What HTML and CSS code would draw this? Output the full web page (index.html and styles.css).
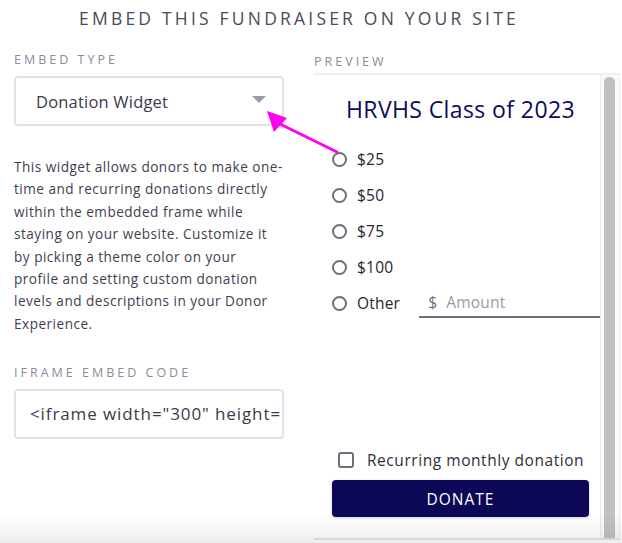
FILE: index.html
```html
<!DOCTYPE html>
<html>
<head>
  <link rel="stylesheet" href="styles.css">
</head>
<body>
  <div class="page">
    <h1 class="page-title">EMBED THIS FUNDRAISER ON YOUR SITE</h1>

    <div class="columns">
      <div class="settings">
        <p class="label">EMBED TYPE</p>
        <div class="select">
          <span>Donation Widget</span>
          <span class="caret"></span>
        </div>

        <p class="description">This widget allows donors to make one-time and recurring donations directly within the embedded frame while staying on your website. Customize it by picking a theme color on your profile and setting custom donation levels and descriptions in your Donor Experience.</p>

        <p class="label label-code">IFRAME EMBED CODE</p>
        <div class="code-box"><span class="code">&lt;iframe width="300" height=</span></div>
      </div>

      <div class="preview">
        <p class="label">PREVIEW</p>
        <div class="frame">
          <div class="widget">
            <h2 class="widget-title">HRVHS Class of 2023</h2>

            <div class="levels">
              <label class="level"><span class="radio"></span>$25</label>
              <label class="level"><span class="radio"></span>$50</label>
              <label class="level"><span class="radio"></span>$75</label>
              <label class="level"><span class="radio"></span>$100</label>
              <label class="level">
                <span class="radio"></span>Other
                <span class="amount"><span class="dollar">$</span>Amount</span>
              </label>
            </div>

            <label class="recurring"><span class="checkbox"></span>Recurring monthly donation</label>
            <button class="donate">DONATE</button>
          </div>
          <div class="scrollbar"><div class="thumb"></div></div>
        </div>
      </div>
    </div>
  </div>

  <!-- arrow annotation -->
  <svg class="pointer" width="622" height="543" viewBox="0 0 622 543">
    <line x1="337" y1="152" x2="278" y2="123" stroke="#ff00f0" stroke-width="3" stroke-linecap="round"/>
    <polygon points="267,111 287,118 274,132" fill="#ff00f0"/>
  </svg>

  <div class="fade"></div>
</body>
</html>
```

FILE: styles.css
```css
* {
  margin: 0;
  padding: 0;
  box-sizing: border-box;
}

body {
  font-family: "Open Sans", "Noto Sans", sans-serif;
  color: #3f3f50;
  background: #fff;
  overflow: hidden;
}

.page {
  width: 622px;
  height: 543px;
}

.page-title {
  font-size: 17.5px;
  font-weight: 400;
  letter-spacing: 3.2px;
  color: #4a4a5a;
  text-align: center;
  padding: 6px 24px 0 0;
  height: 52px;
}

.columns {
  display: grid;
  grid-template-columns: 270px 306px;
  column-gap: 30px;
  padding-left: 14px;
}

.label {
  font-size: 12.5px;
  letter-spacing: 3px;
  color: #8b8b9b;
  line-height: 16px;
  margin-bottom: 8px;
}

.select {
  height: 50px;
  border: 2px solid #e2e2e8;
  border-radius: 4px;
  display: flex;
  align-items: center;
  justify-content: space-between;
  padding: 0 16px 0 20px;
  font-size: 16.5px;
  letter-spacing: 0.2px;
  color: #3b3b4b;
}

.caret {
  width: 0;
  height: 0;
  border-left: 7px solid transparent;
  border-right: 7px solid transparent;
  border-top: 7px solid #9a9aaa;
  margin-top: -4px;
}

.description {
  font-size: 13.6px;
  letter-spacing: 0.49px;
  line-height: 22.4px;
  color: #3f3f50;
  margin-top: 30px;
}

.label-code {
  margin-top: 30px;
}

.code-box {
  height: 50px;
  border: 2px solid #e2e2e8;
  border-radius: 4px;
  padding: 0 0 0 14px;
  overflow: hidden;
  color: #3b3b4b;
}

.code {
  display: block;
  font-size: 17px;
  letter-spacing: 0.9px;
  line-height: 46px;
  white-space: nowrap;
}

.preview .label {
  margin-top: 2px;
  margin-bottom: 3px;
}

.frame {
  display: flex;
  height: 467px;
  border-top: 2px solid #f0f0f2;
  border-bottom: 2px solid #e4e4e4;
}

.widget {
  width: 286px;
  padding: 18px 11px 0 18px;
  display: flex;
  flex-direction: column;
  overflow: hidden;
}

.widget-title {
  font-size: 23px;
  font-weight: 400;
  letter-spacing: 0.4px;
  color: #0d0a5c;
  text-align: center;
  margin-bottom: 23px;
}

.levels {
  display: flex;
  flex-direction: column;
  gap: 14px;
}

.level {
  display: flex;
  align-items: center;
  height: 22px;
  font-size: 15.5px;
  letter-spacing: 0.2px;
  color: #26262e;
}

.radio {
  flex-shrink: 0;
  width: 15px;
  height: 15px;
  border: 2px solid #6d6d7d;
  border-radius: 50%;
  margin-right: 10px;
}

.amount {
  display: flex;
  align-items: center;
  margin-left: 19px;
  width: 182px;
  flex-shrink: 0;
  height: 30px;
  padding-left: 9px;
  border-bottom: 2px solid #6d6d7d;
  color: #9a9aa6;
  font-size: 15.5px;
}

.dollar {
  color: #6d6d7d;
  margin-right: 9px;
}

.recurring {
  display: flex;
  align-items: center;
  margin-top: auto;
  font-size: 15.5px;
  letter-spacing: 0.55px;
  color: #2f2f3a;
  margin-bottom: 9px;
}

.checkbox {
  flex-shrink: 0;
  width: 16px;
  height: 16px;
  border: 2px solid #6d6d7d;
  border-radius: 3px;
  margin: 0 13px 0 6px;
}

.donate {
  height: 37px;
  width: 257px;
  background: #0d0758;
  color: #fff;
  border: none;
  border-radius: 4px;
  font-family: inherit;
  font-size: 15.5px;
  letter-spacing: 1px;
  margin-bottom: 21px;
  box-shadow: 0 1px 3px rgba(0, 0, 0, 0.2);
}

.scrollbar {
  width: 20px;
  border-left: 1px solid #ececec;
  border-right: 1px solid #ececec;
  padding: 2px 4px 0 3px;
  background: #fafafa;
}

.thumb {
  height: 100%;
  background: #c1c1c1;
  border-radius: 5px 5px 0 0;
}

.pointer {
  position: absolute;
  top: 0;
  left: 0;
  pointer-events: none;
}

.fade {
  position: absolute;
  left: 0;
  right: 0;
  bottom: 0;
  height: 30px;
  background: linear-gradient(rgba(0, 0, 0, 0), rgba(0, 0, 0, 0.07));
  pointer-events: none;
}
```
